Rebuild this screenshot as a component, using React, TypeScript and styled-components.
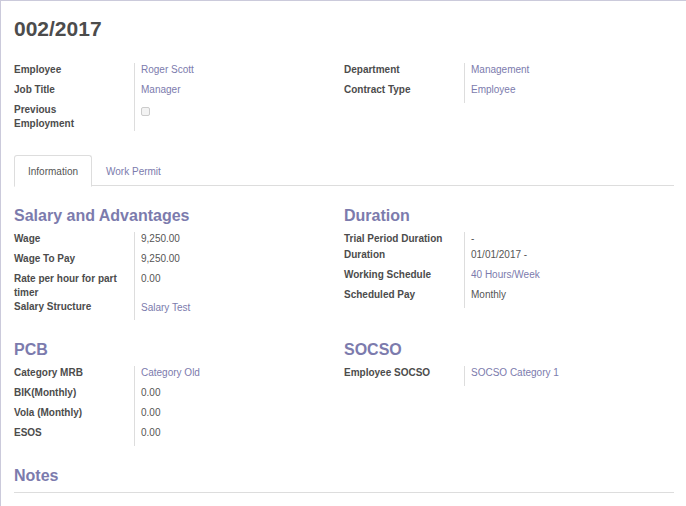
import React from 'react';
import styled, { createGlobalStyle } from 'styled-components';

const GlobalStyle = createGlobalStyle`
  html, body {
    margin: 0;
    padding: 0;
    background: #ffffff;
  }
  body {
    font-family: "Liberation Sans", Arial, Helvetica, sans-serif;
    color: #4c4c4c;
  }
`;

const Sheet = styled.div`
  box-sizing: border-box;
  min-height: 506px;
  width: 686px;
  border-top: 1px solid #cbcadb;
  border-left: 1px solid #cbcadb;
  padding: 0 12px 0 13px;
`;

const Title = styled.h1`
  margin: 16px 0 0 0;
  font-size: 21px;
  line-height: 24px;
  font-weight: bold;
  color: #4c4c4c;
`;

const TwoCols = styled.div<{ $top?: number }>`
  display: grid;
  grid-template-columns: 330px 330px;
  align-items: start;
  margin-top: ${props => props.$top ?? 0}px;
`;

const FieldTable = styled.table`
  align-self: start;
  border-collapse: collapse;
  border-spacing: 0;
  font-size: 10px;
  line-height: 14px;
`;

const Label = styled.td`
  width: 120px;
  padding: 0;
  vertical-align: top;
  font-weight: bold;
  color: #4c4c4c;
`;

const Value = styled.td<{ $pad?: number; $shift?: number }>`
  padding: ${props => props.$shift ?? 0}px 0 ${props => props.$pad ?? 6}px 6px;
  border-left: 1px solid #dddddd;
  vertical-align: top;
  color: #555555;
`;

const Link = styled.span`
  color: #7c7bad;
`;

const Checkbox = styled.span`
  display: block;
  box-sizing: border-box;
  width: 9px;
  height: 9px;
  margin-top: 4px;
  border: 1px solid #cccccc;
  border-radius: 2px;
  background: #f3f3f3;
`;

const TabBar = styled.div`
  display: flex;
  margin-top: 24px;
  height: 30px;
  border-bottom: 1px solid #dddddd;
`;

const Tab = styled.div<{ $active?: boolean }>`
  display: flex;
  align-items: center;
  height: 30px;
  padding: 0 13px;
  margin-bottom: -1px;
  font-size: 10px;
  border: 1px solid ${props => (props.$active ? '#dddddd' : 'transparent')};
  border-bottom: 1px solid ${props => (props.$active ? '#ffffff' : 'transparent')};
  border-radius: 3px 3px 0 0;
  background: ${props => (props.$active ? '#ffffff' : 'transparent')};
  color: ${props => (props.$active ? '#555555' : '#7c7bad')};
`;

const SectionTitle = styled.h2<{ $line?: boolean }>`
  margin: 20px 0 6px 0;
  font-size: 16px;
  line-height: 20px;
  font-weight: bold;
  color: #7c7bad;
  ${props =>
    props.$line &&
    `
    margin-bottom: 0;
    padding-bottom: 6px;
    border-bottom: 1px solid #dddddd;
  `}
`;

type Field = {
  label: React.ReactNode;
  value: React.ReactNode;
  link?: boolean;
  pad?: number;
  shift?: number;
};

function Fields({ rows }: { rows: Field[] }) {
  return (
    <FieldTable>
      <tbody>
        {rows.map((row, i) => (
          <tr key={i}>
            <Label>{row.label}</Label>
            <Value $pad={row.pad} $shift={row.shift}>
              {row.link ? <Link>{row.value}</Link> : row.value}
            </Value>
          </tr>
        ))}
      </tbody>
    </FieldTable>
  );
}

function Section({ title, rows }: { title: string; rows: Field[] }) {
  return (
    <div>
      <SectionTitle>{title}</SectionTitle>
      <Fields rows={rows} />
    </div>
  );
}

export default function App() {
  return (
    <>
      <GlobalStyle />
      <Sheet>
        <Title>002/2017</Title>

        <TwoCols $top={22}>
          <Fields
            rows={[
              { label: 'Employee', value: 'Roger Scott', link: true },
              { label: 'Job Title', value: 'Manager', link: true },
              { label: <>Previous<br />Employment</>, value: <Checkbox />, pad: 0 },
            ]}
          />
          <Fields
            rows={[
              { label: 'Department', value: 'Management', link: true },
              { label: 'Contract Type', value: 'Employee', link: true },
            ]}
          />
        </TwoCols>

        <TabBar>
          <Tab $active>Information</Tab>
          <Tab>Work Permit</Tab>
        </TabBar>

        <TwoCols>
          <Section
            title="Salary and Advantages"
            rows={[
              { label: 'Wage', value: '9,250.00' },
              { label: 'Wage To Pay', value: '9,250.00' },
              { label: 'Rate per hour for part timer', value: '0.00' },
              { label: 'Salary Structure', value: 'Salary Test', link: true, shift: 1, pad: 5 },
            ]}
          />
          <Section
            title="Duration"
            rows={[
              { label: 'Trial Period Duration', value: '-', pad: 2 },
              { label: 'Duration', value: '01/01/2017 -' },
              { label: 'Working Schedule', value: '40 Hours/Week', link: true },
              { label: 'Scheduled Pay', value: 'Monthly' },
            ]}
          />
          <Section
            title="PCB"
            rows={[
              { label: 'Category MRB', value: 'Category Old', link: true },
              { label: 'BIK(Monthly)', value: '0.00' },
              { label: 'Vola (Monthly)', value: '0.00' },
              { label: 'ESOS', value: '0.00' },
            ]}
          />
          <Section
            title="SOCSO"
            rows={[{ label: 'Employee SOCSO', value: 'SOCSO Category 1', link: true }]}
          />
        </TwoCols>

        <SectionTitle $line>Notes</SectionTitle>
      </Sheet>
    </>
  );
}
